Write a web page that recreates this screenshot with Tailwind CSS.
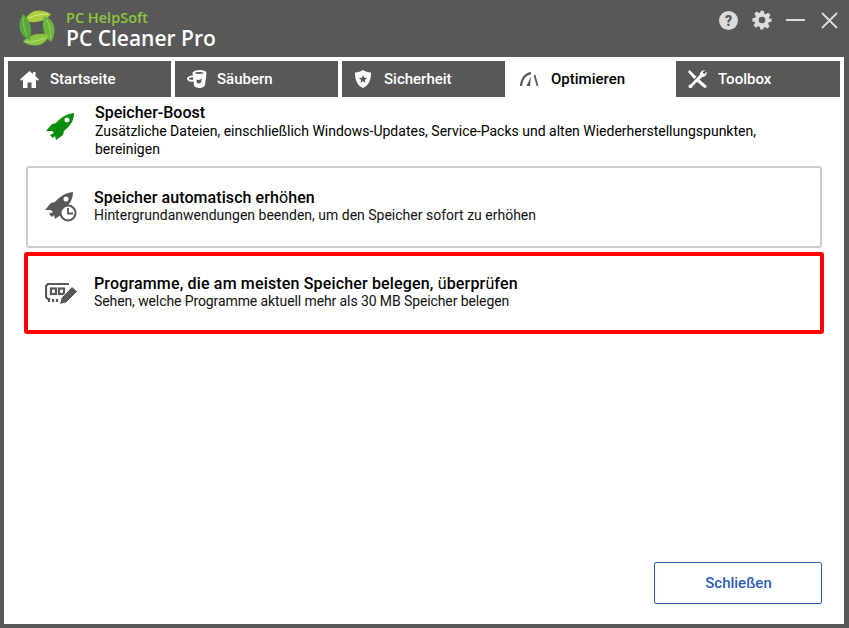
<!DOCTYPE html>
<html lang="de">
<head>
<meta charset="UTF-8">
<title>PC Cleaner Pro</title>
<script src="https://cdn.jsdelivr.net/npm/@tailwindcss/browser@4"></script>
</head>
<body class="bg-[#585858] font-['Roboto',sans-serif]">
<div class="w-[849px] h-[628px] flex flex-col overflow-hidden">
  <!-- title bar -->
  <header class="h-[57px] flex items-start pl-[17px] shrink-0">
    <svg class="w-[40px] h-[40px] mt-[8px]" viewBox="0 0 40 40">
      <path d="M8 13C10 5 20-2 34 6C29 13 18 16 8 13Z" fill="#a9d03c"/>
      <path d="M8 13C10 5 20-2 34 6C29 13 18 16 8 13Z" fill="#6cb33f" transform="rotate(90 20 20)"/>
      <path d="M8 13C10 5 20-2 34 6C29 13 18 16 8 13Z" fill="#8cc63f" transform="rotate(180 20 20)"/>
      <path d="M8 13C10 5 20-2 34 6C29 13 18 16 8 13Z" fill="#56a83c" transform="rotate(270 20 20)"/>
      <path d="M12 10C18 7 25 6 31 6" stroke="#e4efa0" stroke-width=".8" fill="none"/>
      <path d="M30 12C33 18 34 25 34 31" stroke="#a8d670" stroke-width=".8" fill="none"/>
      <path d="M28 30C22 33 15 34 9 34" stroke="#c9e48a" stroke-width=".8" fill="none"/>
      <path d="M10 28C7 22 6 15 6 9" stroke="#97cb66" stroke-width=".8" fill="none"/>
    </svg>
    <div class="ml-[9px] mt-[10px] font-['Open_Sans',sans-serif]">
      <div class="text-[#8dc63f] text-[14.500px] leading-[16px] font-semibold">PC HelpSoft</div>
      <div class="text-white text-[21px] leading-[24px] font-semibold">PC Cleaner Pro</div>
    </div>
    <div class="ml-auto w-[130px] flex items-center mt-[10px]">
      <svg class="w-[19px] h-[19px]" viewBox="0 0 19 19"><circle cx="9.500" cy="9.500" r="9.500" fill="#dcdcdc"/><text x="9.500" y="14.500" text-anchor="middle" font-size="14" font-weight="900" font-family="Roboto" fill="#585858">?</text></svg>
      <svg class="w-[20px] h-[20px] ml-[14px]" viewBox="0 0 24 24" fill="#dcdcdc"><path fill-rule="evenodd" d="M10 1h4l.7 3.200 1.900.8 2.800-1.800 2.800 2.800-1.800 2.800.8 1.900L23.500 10v4l-3.300.7-.8 1.900 1.800 2.800-2.800 2.800-2.800-1.800-1.900.8L14 23.500h-4l-.7-3.300-1.900-.8-2.800 1.800-2.800-2.800 1.800-2.800-.8-1.900L.5 14v-4l3.300-.7.8-1.900L2.800 4.600l2.800-2.800 2.800 1.800 1.900-.8ZM12 8a4 4 0 1 0 0 8a4 4 0 0 0 0-8Z"/></svg>
      <div class="w-[19px] h-[2px] bg-[#dcdcdc] ml-[14px]"></div>
      <svg class="w-[17px] h-[17px] ml-[16px]" viewBox="0 0 17 17" stroke="#dcdcdc" stroke-width="1.800" fill="none"><path d="M1 1L16 16M16 1L1 16"/></svg>
    </div>
  </header>

  <!-- window body -->
  <div class="ml-[4px] mr-[5px] mb-[4px] flex-1 bg-white flex flex-col">
    <nav class="flex pl-[4px] pt-[4px] gap-[4px] h-[40px] shrink-0 text-[15px] font-medium">
      <a class="w-[163px] bg-[#585858] text-white flex items-center">
        <svg class="w-[19px] h-[17px] ml-[12px]" viewBox="0 0 19 17" fill="#fff"><path d="M9.500 0L13 3V1H15.500V5.200L19 8.500L17.800 9.800L16 8.200V17H11.500V11.500H7.500V17H3V8.200L1.200 9.800L0 8.500Z"/></svg>
        <span class="ml-[11px]">Startseite</span>
      </a>
      <a class="w-[163px] bg-[#585858] text-white flex items-center">
        <svg class="w-[20px] h-[18px] ml-[12px]" viewBox="0 0 20 18" fill="#fff"><path fill-rule="evenodd" d="M5.500 2.500C7 .8 10 0 13 0C16.500 0 19 1 19.500 2.800L18 15C17.500 17 15 18 12.500 18C9.500 18 7.500 17 7 15.500L6.500 11.500C3 12 .5 11 0 9C-.3 7.300 2 5.800 5.800 5.500ZM7.500 3C9 4.200 15.500 4.200 17 3C15.500 1.500 9 1.500 7.500 3ZM1.800 8.700C2.300 9.700 4 10 6.300 9.700L6 7.300C3.500 7.400 2 7.900 1.800 8.700ZM9.500 9.500C11.500 10.500 13.500 9.500 15 8.500L14 12.500C12 14 10.500 13.500 9.800 12.500Z"/></svg>
        <span class="ml-[10px]">Säubern</span>
      </a>
      <a class="w-[163px] bg-[#585858] text-white flex items-center">
        <svg class="w-[16px] h-[18px] ml-[13px]" viewBox="0 0 16 18" fill="#fff"><path fill-rule="evenodd" d="M8 0C10 1.500 13 2.500 16 2.500C16 9 14.500 15 8 18C1.500 15 0 9 0 2.500C3 2.500 6 1.500 8 0ZM8 5L6.800 7.700L4 8L6.100 9.900L5.500 12.700L8 11.200L10.500 12.700L9.900 9.900L12 8L9.200 7.700Z"/></svg>
        <span class="ml-[13px]">Sicherheit</span>
      </a>
      <a class="w-[167px] -ml-[4px] bg-white text-black flex items-center">
        <svg class="w-[19px] h-[14px] ml-[15px]" viewBox="0 0 19 14" fill="none" stroke="#585858"><path d="M1 14C1 8 5 2 11 1.200" stroke-width="2.200"/><path d="M14.500 3L17.500 14" stroke-width="1.800"/><path d="M6.500 14L11 4.500L10 14Z" fill="#585858" stroke="none"/></svg>
        <span class="ml-[12px]">Optimieren</span>
      </a>
      <a class="w-[164px] bg-[#585858] text-white flex items-center">
        <svg class="w-[19px] h-[18px] ml-[12px]" viewBox="0 0 20 19" fill="#fff"><path d="M1.500 0L9 7L6.500 9.500L0 2Z"/><path d="M20 1.500C20 5 17.500 7.500 15 7.500L5 17C5 18.800 2.500 20 1 18.500C-.3 17 1 14.500 3 15L12.500 5C12.300 2.500 15 0 18 0L15.500 2.500L17 4.500Z"/><path d="M9.500 12.500L12 10L19.500 16.500C20 18 18.500 19.500 17 18.700Z"/></svg>
        <span class="ml-[11px]">Toolbox</span>
      </a>
    </nav>

    <div class="flex-1 flex flex-col px-[20px]">
      <!-- intro -->
      <section class="flex h-[69px] shrink-0 text-black">
        <svg class="w-[28px] h-[28px] ml-[22px] mt-[16px] shrink-0" viewBox="0 0 28 28" fill="#0a8f0a"><path fill-rule="evenodd" d="M28 0C20 1 14 5 10 10L6 11L0 18L6 18L8 20L4 22L7 25L9 23L10 27L17 22L18 18C24 13 28 8 28 0ZM21 4.500a2.500 2.500 0 1 0 0 5a2.500 2.500 0 0 0 0-5Z"/></svg>
        <div class="ml-[21px] pt-[5px] w-[700px] shrink-0 text-[14px] leading-[18px]">
          <h2 class="font-medium text-[16px] leading-[21px] -mb-[1px]">Speicher-Boost</h2>
          <p>Zusätzliche Dateien, einschließlich Windows-Updates, Service-Packs und alten Wiederherstellungspunkten, bereinigen</p>
        </div>
      </section>
      <!-- cards -->
      <button class="h-[82px] mx-[2px] shrink-0 border-2 border-[#cccccc] rounded-[3px] flex items-center text-left">
        <svg class="w-[32px] h-[30px] ml-[17px] shrink-0" viewBox="0 0 32 30" fill="#585858"><path d="M28 0C20 1 14 5 10 10L6 11L0 18L6 18L8 20L4 22L7 25L9 23L10 27L17 22L18 18C24 13 28 8 28 0Z"/><circle cx="21" cy="7" r="2.500" fill="#fff"/><circle cx="23" cy="21" r="7.500" fill="#fff" stroke="#585858" stroke-width="2"/><path d="M23 16V21.500H28" fill="none" stroke="#585858" stroke-width="1.800"/></svg>
        <span class="ml-[17px] mb-[1px] text-black">
          <span class="block font-medium text-[16px] leading-[18px] tracking-[.08px]">Speicher automatisch erh<span class="font-normal">ö</span>hen</span>
          <span class="block text-[14px] leading-[17px] text-[#111]">Hintergrundanwendungen beenden, um den Speicher sofort zu erhöhen</span>
        </span>
      </button>
      <button class="h-[82px] mt-[4px] shrink-0 border-4 border-[#ff0000] rounded-[3px] flex items-center text-left">
        <svg class="w-[33px] h-[23px] ml-[17px] shrink-0" viewBox="0 0 33 23" fill="none" stroke="#585858" stroke-width="2.200"><path d="M24 2H3L1 4V15L3 17H4V20M8 17V20M12 17V20M16 17H17"/><rect x="6" y="6.500" width="5" height="5.500"/><rect x="14" y="6.500" width="5" height="5.500"/><path d="M14.500 22.500L16 16L27 4.500L32.500 9.500L21 21Z" fill="#585858" stroke="#fff" stroke-width="1"/></svg>
        <span class="ml-[16px] mb-[1px] text-black">
          <span class="block font-medium text-[16px] leading-[18px] tracking-[.16px]">Programme, die am meisten Speicher belegen, <span class="font-normal">ü</span>berpr<span class="font-normal">ü</span>fen</span>
          <span class="block text-[14px] leading-[17px] tracking-[-.1px] text-[#111]">Sehen, welche Programme aktuell mehr als 30 MB Speicher belegen</span>
        </span>
      </button>
      <div class="mt-auto mb-[20px] mr-[2px] flex justify-end">
        <button class="w-[168px] h-[42px] pl-[1px] border border-[#2a5fb4] rounded-[2px] text-[#2a5fb4] text-[15px] font-medium">Schließen</button>
      </div>
    </div>
  </div>
</div>
</body>
</html>
